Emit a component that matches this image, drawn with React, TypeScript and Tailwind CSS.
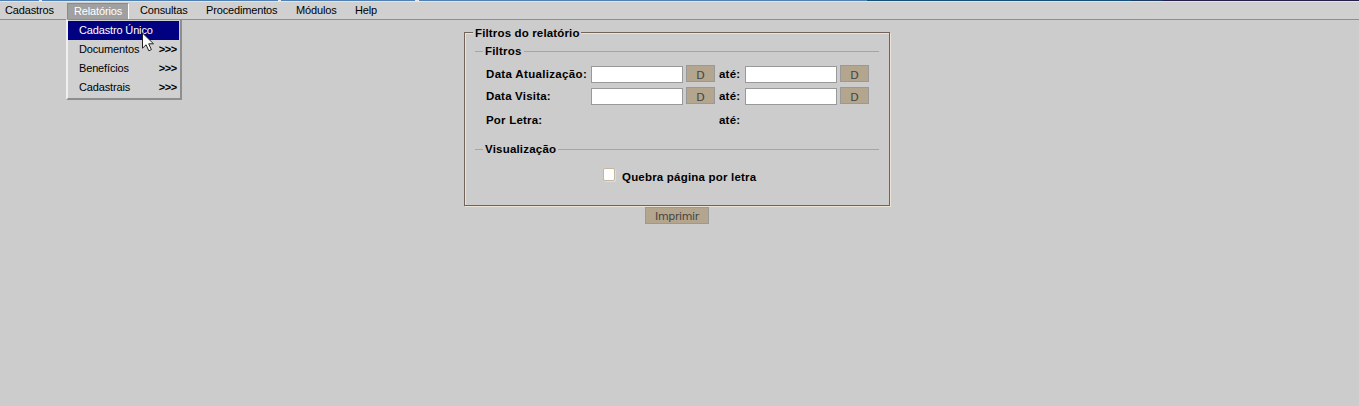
import { useState } from "react";

const menuItems = [
  { label: "Cadastros", width: "w-[62px]" },
  { label: "Relatórios", width: "w-[62px]" },
  { label: "Consultas", width: "w-[66px]" },
  { label: "Procedimentos", width: "w-[90px]" },
  { label: "Módulos", width: "w-[59px]" },
  { label: "Help", width: "w-[60px]" },
];

const submenu = ["Cadastro Único", "Documentos", "Benefícios", "Cadastrais"];

function MenuBar() {
  return (
    <nav className="flex h-[19px] border-t border-b border-t-[#e4e4e4] border-b-[#8e8e8e] bg-[#d0d0d0] pl-[5px] text-[11px] leading-[17px] tracking-[-0.15px]">
      {menuItems.map((item) =>
        item.label === "Relatórios" ? (
          <div key={item.label} className="relative mr-[11px] h-[17px] w-[62px]">
            <div className="mt-px h-4 border-t border-r border-l border-t-[#8a8a8a] border-r-white border-l-[#8a8a8a] bg-[#a0a0a0] pl-[6px] leading-[15px] text-white">
              {item.label}
            </div>
            <Submenu />
          </div>
        ) : (
          <div key={item.label} className={item.width}>
            {item.label}
          </div>
        ),
      )}
    </nav>
  );
}

function Submenu() {
  return (
    <ul className="absolute top-[17px] left-[-1px] z-10 w-[116px] border-t border-r-2 border-b-2 border-l-2 border-t-[#8e8e8e] border-r-[#8e8e8e] border-b-[#8e8e8e] border-l-[#f0f0f0] bg-[#d0d0d0] pt-px pb-px">
      {submenu.map((label, i) => (
        <li
          key={label}
          className={
            i === 0
              ? "mr-px flex h-[19px] bg-[#000080] pl-[11px] leading-[19px] text-white"
              : "flex h-[19px] justify-between pr-[3px] pl-[11px] leading-[19px]"
          }
        >
          <span>{label}</span>
          {i > 0 && <span className="font-bold tracking-[-0.3px]">&gt;&gt;&gt;</span>}
        </li>
      ))}
      <svg className="absolute top-[12px] left-[73px]" width="15" height="21" viewBox="0 0 15 21">
        <path d="M1.5 1v15.2l3.6-3.4 2.7 6 2.6-1.2-2.7-5.8h4.8z" fill="#fff" stroke="#222" />
      </svg>
    </ul>
  );
}

function DateButton() {
  return (
    <button className="h-[17px] w-[29px] border border-[#999] bg-[#b3a58e] pt-[2px] text-center font-['DejaVu_Sans'] text-[11px] leading-[16px] font-normal tracking-normal text-[#444]">
      D
    </button>
  );
}

function DateRow({ label, tight }: { label: string; tight?: boolean }) {
  return (
    <div className="flex h-[22px]">
      <label className={tight ? "w-[105px] leading-[18px]" : "w-[105px] leading-[18px] tracking-[0.33px]"}>
        {label}
      </label>
      <input className="mt-px h-[17px] w-[92px] border border-[#999] bg-white" />
      <div className="flex w-[36px] pl-[3px]">
        <DateButton />
      </div>
      <span className="w-[26px] leading-[18px]">até:</span>
      <input className="mt-px h-[17px] w-[92px] border border-[#999] bg-white" />
      <div className="flex pl-[3px]">
        <DateButton />
      </div>
    </div>
  );
}

function SectionTitle({ children }: { children: string }) {
  return (
    <div className="flex h-[14px] items-center">
      <span className="h-px w-2 bg-[#a5a5a5]" />
      <span className="px-[2px] pt-[2px]">{children}</span>
      <span className="h-px flex-1 bg-[#a5a5a5]" />
    </div>
  );
}

export default function App() {
  const [breakPage, setBreakPage] = useState(false);
  return (
    <div className="h-[406px] w-[1359px] overflow-hidden bg-[#ccc] font-['Liberation_Sans',sans-serif] text-black">
      <div className="flex h-px bg-[#4f81b4]">
        <span className="ml-[39px] w-[3px] bg-[#e8e8e8]" />
        <span className="ml-[236px] w-[3px] bg-[#e8e8e8]" />
        <span className="ml-[134px] w-[4px] bg-[#e8e8e8]" />
        <span className="ml-[448px] w-[264px] bg-[#14507c]" />
        <span className="w-[32px] bg-[#1d3a63]" />
        <span className="flex-1 bg-[#25204a]" />
      </div>
      <MenuBar />
      <main className="ml-[464px] w-[426px] pt-[6px] text-[11.5px] font-bold tracking-[0.2px]">
        <section className="flex h-[181px] flex-col">
          <div className="z-[1] -mb-[8px] ml-[9px] h-[14px] w-[108px] bg-[#ccc] px-[2px] leading-[15px] tracking-[0.15px] whitespace-nowrap">
            Filtros do relatório
          </div>
          <div className="h-[174px] border border-[#736357] shadow-[1px_1px_0_#ede3d5,inset_1px_1px_0_#ede3d5]">
            <div className="px-[10px] pt-[11px]">
              <SectionTitle>Filtros</SectionTitle>
              <div className="pt-[7px] pl-[11px]">
                <DateRow label="Data Atualização:" />
                <DateRow label="Data Visita:" tight />
                <div className="flex h-[33px] pt-[2px] leading-[18px]">
                  <span className="w-[233px]">Por Letra:</span>
                  <span>até:</span>
                </div>
              </div>
              <SectionTitle>Visualização</SectionTitle>
              <label className="flex pt-[11px] pl-[128px]">
                <input
                  type="checkbox"
                  checked={breakPage}
                  onChange={() => setBreakPage(!breakPage)}
                  className="mt-px h-[13px] w-[12px] appearance-none rounded-[2px] border border-[#c4b5a0] bg-white shadow-[1px_1px_0_#ddd]"
                />
                <span className="mt-px ml-[7px] leading-[18px]">Quebra página por letra</span>
              </label>
            </div>
          </div>
        </section>
        <button className="ml-[181px] block h-[17px] w-[64px] border border-[#999] bg-[#b3a58e] pt-px text-center font-['DejaVu_Sans'] text-[11px] leading-[16px] font-normal tracking-[-0.35px] text-[#444]">
          Imprimir
        </button>
      </main>
    </div>
  );
}
